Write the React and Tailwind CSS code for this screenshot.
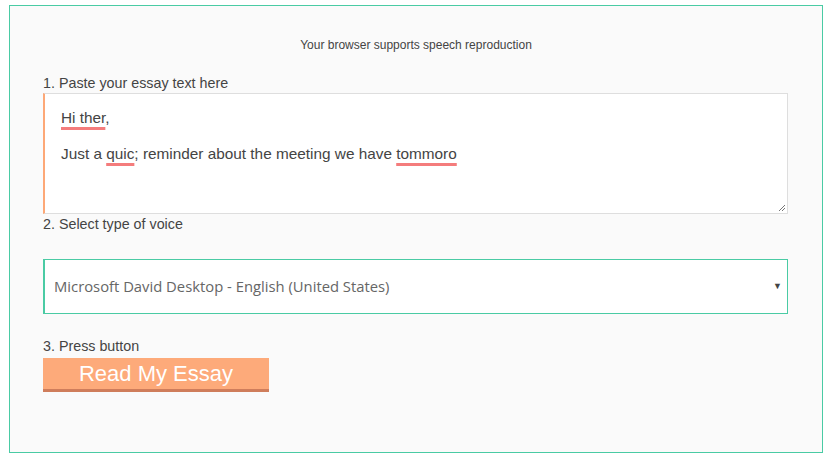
import React from 'react';

const Misspelled = ({ children }) => (
  <span className="underline decoration-[#f47c7c] decoration-[3px] underline-offset-[4px]">{children}</span>
);

export default function App() {
  return (
    <div className="w-[829px] h-[460px] bg-white pt-[5px] pl-[9px] font-['Liberation_Sans',Arial,sans-serif]">
      <div className="w-[814px] h-[448px] border border-[#4acba4] bg-[#fafafa] pt-[32px] pl-[33px] pr-[33px]">
        <p className="text-center text-[12px] text-[#444] leading-[14px]">Your browser supports speech reproduction</p>

        <label className="block mt-[23px] text-[14.3px] leading-[16px] text-[#444]">1. Paste your essay text here</label>
        <div className="mt-[2px] w-[745px] h-[121px] bg-white border border-[#dedede] border-l-2 border-l-[#fda877] pl-[16px] pt-[15px] text-[15.35px] leading-[18px] text-[#444] relative">
          <p><Misspelled>Hi ther</Misspelled>,</p>
          <p className="mt-[18px]">
            Just a <Misspelled>quic</Misspelled>; reminder about the meeting we have <Misspelled>tommoro</Misspelled>
          </p>
          <svg className="absolute right-[1px] bottom-[1px]" width="9" height="9" viewBox="0 0 9 9">
            <path d="M8 2 L2 8 M8 5 L5 8" stroke="#777" strokeWidth="1" />
          </svg>
        </div>

        <label className="block mt-[2px] text-[14.3px] leading-[16px] text-[#444]">2. Select type of voice</label>
        <div className="mt-[27px] w-[745px] h-[55px] bg-white border border-[#4acba4] border-l-2 flex items-center justify-between pl-[9px] pr-[5px]">
          <span className="font-['Open_Sans',sans-serif] text-[14.8px] text-[#666]">Microsoft David Desktop - English (United States)</span>
          <span className="text-[9px] text-[#444] leading-none">▼</span>
        </div>

        <label className="block mt-[24px] text-[14.3px] leading-[16px] text-[#444]">3. Press button</label>
        <button className="mt-[4px] w-[226px] h-[34px] bg-[#fdaa7a] border-b-[3px] border-[#cf7d5b] text-white text-[22px] leading-[30px] text-center">
          Read My Essay
        </button>
      </div>
    </div>
  );
}
